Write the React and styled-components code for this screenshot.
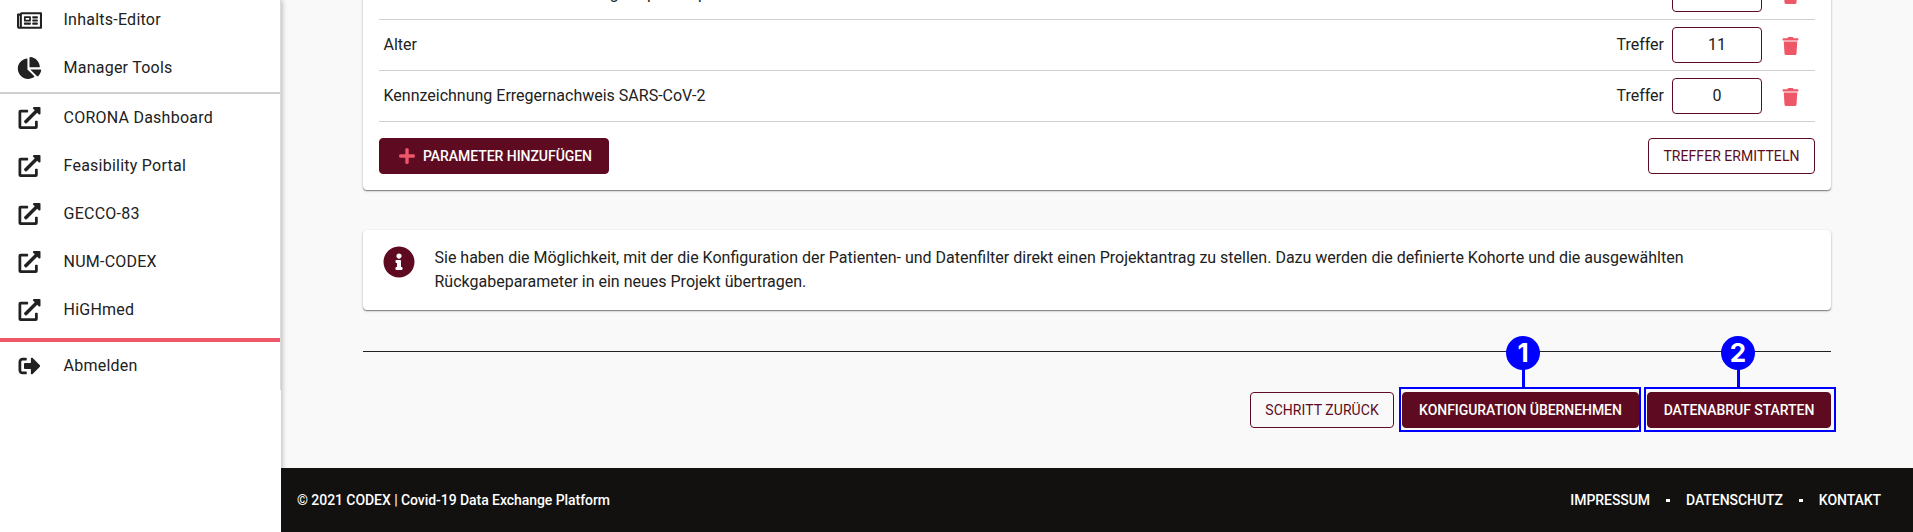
import React from "react";
import styled, { createGlobalStyle, css } from "styled-components";
import {
  FaRegNewspaper,
  FaChartPie,
  FaExternalLinkAlt,
  FaSignOutAlt,
  FaTrash,
  FaPlus,
  FaInfoCircle,
} from "react-icons/fa";

const GlobalStyle = createGlobalStyle`
  *, *::before, *::after { box-sizing: border-box; }
  body {
    margin: 0;
    overflow: hidden;
    background: #f9f9f9;
    color: #212121;
    font: 400 16px/24px Roboto, "Liberation Sans", sans-serif;
  }
`;

const Page = styled.div`
  display: flex;
  height: 532px;
`;

const Sidebar = styled.aside`
  flex: none;
  width: 281px;
  background: #fff;
  box-shadow: 1px 0 5px rgba(0, 0, 0, 0.28);
  z-index: 1;
`;

const Menu = styled.nav`
  height: 390px;
  border-right: 1px solid #dcdcdc;
`;

const MenuItem = styled.a`
  display: flex;
  align-items: center;
  height: 48px;
  padding-left: 17px;
  letter-spacing: 0.24px;

  svg {
    width: 25px;
    height: ${(p) => p.$size || 22}px;
    margin-right: 21.5px;
    flex: none;
  }
`;

const InternalGroup = styled.div`
  display: flow-root;
  height: 94px;
  border-bottom: 2px solid #d0d0d0;

  ${MenuItem}:first-child {
    margin-top: -4px;
  }
`;

const ExternalGroup = styled.div`
  padding-bottom: 4px;
  border-bottom: 4px solid #ee5768;
`;

const Main = styled.div`
  flex: 1;
  display: flex;
  flex-direction: column;
  min-width: 0;
`;

const Content = styled.main`
  flex: 1;
  padding: 0 82px;
`;

const Card = styled.section`
  background: #fff;
  border-radius: 4px;
  box-shadow: 0 1px 1px rgba(0, 0, 0, 0.4), 0 1px 3px rgba(0, 0, 0, 0.2);
`;

const ParameterCard = styled(Card)`
  height: 222px;
  margin-top: -32px;
  padding: 1px 16px 15px;
`;

const ParameterRow = styled.div`
  display: flex;
  align-items: center;
  height: 51px;
  padding: 0 16px 0 4.5px;
  border-bottom: 1px solid #d0d0d0;
`;

const ParameterName = styled.span`
  flex: 1;
`;

const HitCount = styled.output`
  display: flex;
  align-items: center;
  justify-content: center;
  width: 90px;
  height: 36px;
  margin: 0 20px 0 8px;
  border: 1px solid #5e0b21;
  border-radius: 4px;
`;

const DeleteIcon = styled(FaTrash)`
  width: 17px;
  height: 18px;
  margin-top: 2px;
  color: #ee5768;
`;

const CardActions = styled.div`
  display: flex;
  justify-content: space-between;
  padding-top: 16px;
`;

const Button = styled.button`
  display: flex;
  align-items: center;
  justify-content: center;
  width: ${(p) => p.$width}px;
  height: 36px;
  padding: 0;
  border: 1px solid #5e0b21;
  border-radius: 4px;
  font: 500 14px/36px Roboto, "Liberation Sans", sans-serif;
  white-space: nowrap;
  ${(p) =>
    p.$filled
      ? css`background: #5e0b21; color: #fff; letter-spacing: -0.05px;`
      : css`background: transparent; color: #5e0b21; font-weight: 400; letter-spacing: 0.05px;`}

  svg {
    width: 16px;
    height: 18px;
    margin: 0 8px 0 3px;
    color: #ee5768;
  }
`;

const InfoCard = styled(Card)`
  display: flex;
  height: 80px;
  margin-top: 40px;
  padding: 16px 20px;

  svg {
    flex: none;
    width: 32px;
    height: 32px;
    margin-right: 19.5px;
    color: #5e0b21;
  }
`;

const InfoText = styled.p`
  margin: 0;
`;

const Divider = styled.hr`
  height: 1px;
  margin: 41px 0 40px;
  border: 0;
  background: #212121;
`;

const StepActions = styled.div`
  display: flex;
  justify-content: flex-end;
  gap: 8px;
`;

const Annotated = styled.div`
  position: relative;
`;

const Highlight = styled.span`
  position: absolute;
  inset: -5px ${(p) => p.$right}px -4px -3px;
  border: 2px solid #00f;
`;

const Stem = styled.span`
  position: absolute;
  top: -24px;
  left: ${(p) => p.$left}px;
  width: 3px;
  height: 21px;
  background: #00f;
`;

const Marker = styled.span`
  position: absolute;
  top: -56px;
  left: ${(p) => p.$left}px;
  width: 34px;
  height: 34px;
  border-radius: 50%;
  background: #00f;
  color: #fff;
  font: 700 26px/34px Inter, "Liberation Sans", sans-serif;
  text-align: center;
`;

const Footer = styled.footer`
  display: flex;
  align-items: center;
  justify-content: space-between;
  height: 64px;
  padding: 0 32px 0 16px;
  background: #12110f;
  color: #fff;
  font-size: 14px;
  font-weight: 500;
  letter-spacing: -0.06px;
  position: relative;
  z-index: 2;
`;

const FooterLinks = styled.div`
  display: flex;
  align-items: center;
`;

const Dot = styled.i`
  width: 4px;
  height: 3px;
  margin: 1px 16px 0;
  background: #fff;
`;

const externalLinks = [
  "CORONA Dashboard",
  "Feasibility Portal",
  "GECCO-83",
  "NUM-CODEX",
  "HiGHmed",
];

const parameters = [
  { name: "Durchschnittswerte der Messung Körpertemperatur", hits: 12 },
  { name: "Alter", hits: 11 },
  { name: "Kennzeichnung Erregernachweis SARS-CoV-2", hits: 0 },
];

export default function App() {
  return (
    <>
      <GlobalStyle />
      <Page>
        <Sidebar>
          <Menu>
            <InternalGroup>
              <MenuItem $size={25}><FaRegNewspaper />Inhalts-Editor</MenuItem>
              <MenuItem><FaChartPie />Manager Tools</MenuItem>
            </InternalGroup>
            <ExternalGroup>
              {externalLinks.map((label) => (
                <MenuItem key={label}><FaExternalLinkAlt />{label}</MenuItem>
              ))}
            </ExternalGroup>
            <MenuItem><FaSignOutAlt />Abmelden</MenuItem>
          </Menu>
        </Sidebar>
        <Main>
          <Content>
            <ParameterCard>
              {parameters.map(({ name, hits }) => (
                <ParameterRow key={name}>
                  <ParameterName>{name}</ParameterName>
                  Treffer
                  <HitCount>{hits}</HitCount>
                  <DeleteIcon />
                </ParameterRow>
              ))}
              <CardActions>
                <Button $filled $width={230}><FaPlus />PARAMETER HINZUFÜGEN</Button>
                <Button $width={167}>TREFFER ERMITTELN</Button>
              </CardActions>
            </ParameterCard>
            <InfoCard>
              <FaInfoCircle />
              <InfoText>
                Sie haben die Möglichkeit, mit der die Konfiguration der Patienten- und Datenfilter direkt einen Projektantrag zu stellen. Dazu werden die definierte Kohorte und die ausgewählten
                <br />
                Rückgabeparameter in ein neues Projekt übertragen.
              </InfoText>
            </InfoCard>
            <Divider />
            <StepActions>
              <Button $width={144}>SCHRITT ZURÜCK</Button>
              <Annotated>
                <Button $filled $width={237}>KONFIGURATION ÜBERNEHMEN</Button>
                <Highlight $right={-2} />
                <Stem $left={120} />
                <Marker $left={104}>1</Marker>
              </Annotated>
              <Annotated>
                <Button $filled $width={184}>DATENABRUF STARTEN</Button>
                <Highlight $right={-5} />
                <Stem $left={90} />
                <Marker $left={74}>2</Marker>
              </Annotated>
            </StepActions>
          </Content>
          <Footer>
            <span>© 2021 CODEX | Covid-19 Data Exchange Platform</span>
            <FooterLinks>
              IMPRESSUM<Dot />DATENSCHUTZ<Dot />KONTAKT
            </FooterLinks>
          </Footer>
        </Main>
      </Page>
    </>
  );
}
